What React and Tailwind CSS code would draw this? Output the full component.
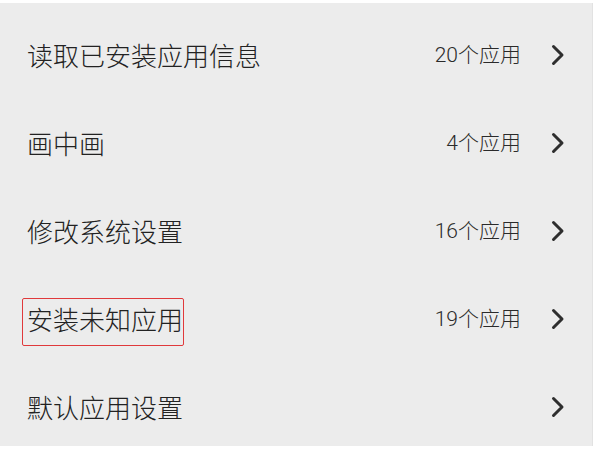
const rows = [
  { title: "读取已安装应用信息", count: "20个应用" },
  { title: "画中画", count: "4个应用" },
  { title: "修改系统设置", count: "16个应用" },
  { title: "安装未知应用", count: "19个应用", marked: true },
  { title: "默认应用设置", count: "" },
];

const Chevron = () => (
  <svg width="14" height="22" viewBox="0 0 14 22" fill="none">
    <polyline
      points="2.5,2.5 11,11 2.5,19.5"
      stroke="#2e2e2e"
      strokeWidth="3"
      strokeLinecap="round"
      strokeLinejoin="round"
    />
  </svg>
);

export default function App() {
  return (
    <div
      className="w-[600px] h-[449px] bg-white overflow-hidden"
      style={{ fontFamily: '"Noto Sans CJK SC", "Noto Sans", sans-serif' }}
    >
      <div className="mt-[3px] h-[443px] bg-[#ececec] pt-[8px] overflow-hidden border-r border-[#e2e2e2] w-[593px]">
        {rows.map((row) => (
          <div key={row.title} className="h-[88px] flex items-center pl-[27px] pr-[27px]">
            <div className="flex-1 flex items-center">
              {row.marked ? (
                <span className="inline-flex items-center h-[48px] mt-[6px] pb-[6px] -ml-[5px] pl-[4px] pr-0 border-[1.5px] border-[#e0393b] rounded-[2px] text-[26px] font-light leading-none text-[#222222]">
                  {row.title}
                </span>
              ) : (
                <span className="text-[26px] font-light leading-none text-[#222222]">{row.title}</span>
              )}
            </div>
            <span
              className="text-[21px] font-light leading-none text-[#2a2a2a] mr-[30px]"
              style={{ fontFamily: 'Roboto, "Noto Sans CJK SC", sans-serif' }}
            >
              {row.count}
            </span>
            <Chevron />
          </div>
        ))}
      </div>
    </div>
  );
}
